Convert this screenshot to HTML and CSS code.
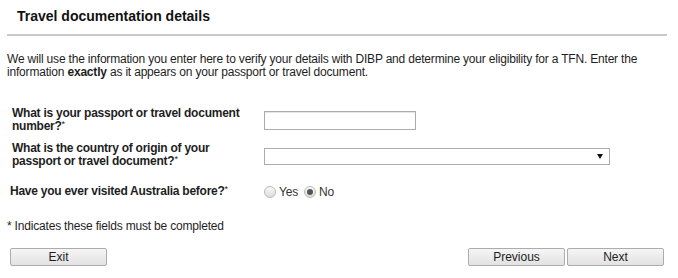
FILE: index.html
```html
<!DOCTYPE html>
<html lang="en">
<head>
  <meta charset="UTF-8">
  <meta name="viewport" content="width=device-width, initial-scale=1.0">
  <title>Travel documentation details</title>
  <link rel="stylesheet" href="styles.css">
</head>
<body>
  <div class="page">
    <h1 class="title">Travel documentation details</h1>
    <p class="intro">We will use the information you enter here to verify your details with DIBP and determine your eligibility for a TFN. Enter the information <b>exactly</b> as it appears on your passport or travel document.</p>

    <div class="form">
      <div class="row row-passport">
        <label class="label" for="passport">What is your passport or travel document number?<span class="req">*</span></label>
        <div class="field"><input class="text-input" type="text" id="passport"></div>
      </div>
      <div class="row row-country">
        <label class="label" for="country">What is the country of origin of your passport or travel document?<span class="req">*</span></label>
        <div class="field">
          <span class="select-wrap"><select class="select" id="country"><option></option></select></span>
        </div>
      </div>
      <div class="row row-visited">
        <span class="label">Have you ever visited Australia before?<span class="req">*</span></span>
        <div class="field radios">
          <label class="radio"><input type="radio" name="visited"> Yes</label>
          <label class="radio"><input type="radio" name="visited" checked> No</label>
        </div>
      </div>
    </div>

    <p class="note">* Indicates these fields must be completed</p>

    <div class="actions">
      <button class="btn">Exit</button>
      <div class="actions-right">
        <button class="btn">Previous</button>
        <button class="btn">Next</button>
      </div>
    </div>
  </div>
</body>
</html>
```

FILE: styles.css
```css
body {
  margin: 0;
  font-family: "Liberation Sans", Arial, sans-serif;
  font-size: 12px;
  letter-spacing: -0.19px;
  color: #1e1e1e;
  background: #fff;
}
.page {
  width: 660px;
  padding: 0 0 0 7px;
}
.title {
  margin: 0;
  padding: 8px 0 9px 10px;
  font-size: 14px;
  font-weight: bold;
  line-height: 17px;
  letter-spacing: 0;
  color: #111;
  border-bottom: 2px solid #c9c9c9;
}
.intro {
  margin: 17px 0 0;
  line-height: 13px;
}
.form {
  margin-top: 28px;
}
.row {
  display: flex;
  align-items: center;
}
.row-country {
  margin-top: 9px;
}
.row-visited {
  margin-top: 16px;
}
.label {
  width: 252px;
  padding-left: 5px;
  box-sizing: border-box;
  font-weight: bold;
  line-height: 13px;
  letter-spacing: -0.25px;
}
.row-visited .label {
  padding-left: 3px;
}
.req {
  display: inline-block;
  font-size: 9px;
  line-height: 9px;
  vertical-align: top;
  font-weight: normal;
}
.field {
  padding-left: 5px;
}
.text-input {
  width: 152px;
  height: 19px;
  box-sizing: border-box;
  border: 1px solid #acacac;
  box-shadow: inset 0 1px 1px #e4e4e4;
  margin: 0;
  padding: 1px 3px;
  font: inherit;
}
.row-country .field {
  padding-top: 3px;
}
.select-wrap {
  position: relative;
  display: block;
}
.select {
  appearance: none;
  -webkit-appearance: none;
  display: block;
  width: 346px;
  height: 17px;
  box-sizing: border-box;
  margin: 0;
  padding: 0 3px;
  border: 1px solid #acacac;
  border-radius: 0;
  background: #fff;
  font: inherit;
}
.select-wrap::after {
  content: "";
  position: absolute;
  right: 7px;
  top: 6px;
  border-left: 3px solid transparent;
  border-right: 3px solid transparent;
  border-top: 5px solid #111;
}
.radios {
  display: flex;
  gap: 6px;
  padding-top: 1px;
}
.radio {
  display: flex;
  align-items: center;
  gap: 3px;
  color: #333;
}
.radio input {
  appearance: none;
  -webkit-appearance: none;
  width: 12px;
  height: 12px;
  margin: 0;
  border: 1px solid #b9b9b9;
  border-radius: 50%;
  background: linear-gradient(#fafafa, #dcdcdc);
  box-sizing: border-box;
  position: relative;
}
.radio input:checked::after {
  content: "";
  position: absolute;
  left: 2px;
  top: 2px;
  width: 6px;
  height: 6px;
  border-radius: 50%;
  background: #555;
}
.note {
  margin: 21px 0 0;
  line-height: 13px;
}
.actions {
  display: flex;
  justify-content: space-between;
  margin-top: 15px;
  padding: 0 3px;
}
.actions-right {
  display: flex;
  gap: 2px;
}
.btn {
  width: 97px;
  height: 18px;
  margin: 0;
  padding: 0;
  font: inherit;
  color: #1e1e1e;
  border: 1px solid #acacac;
  border-radius: 2px;
  background: linear-gradient(#f5f5f5, #e2e2e2);
}
```
